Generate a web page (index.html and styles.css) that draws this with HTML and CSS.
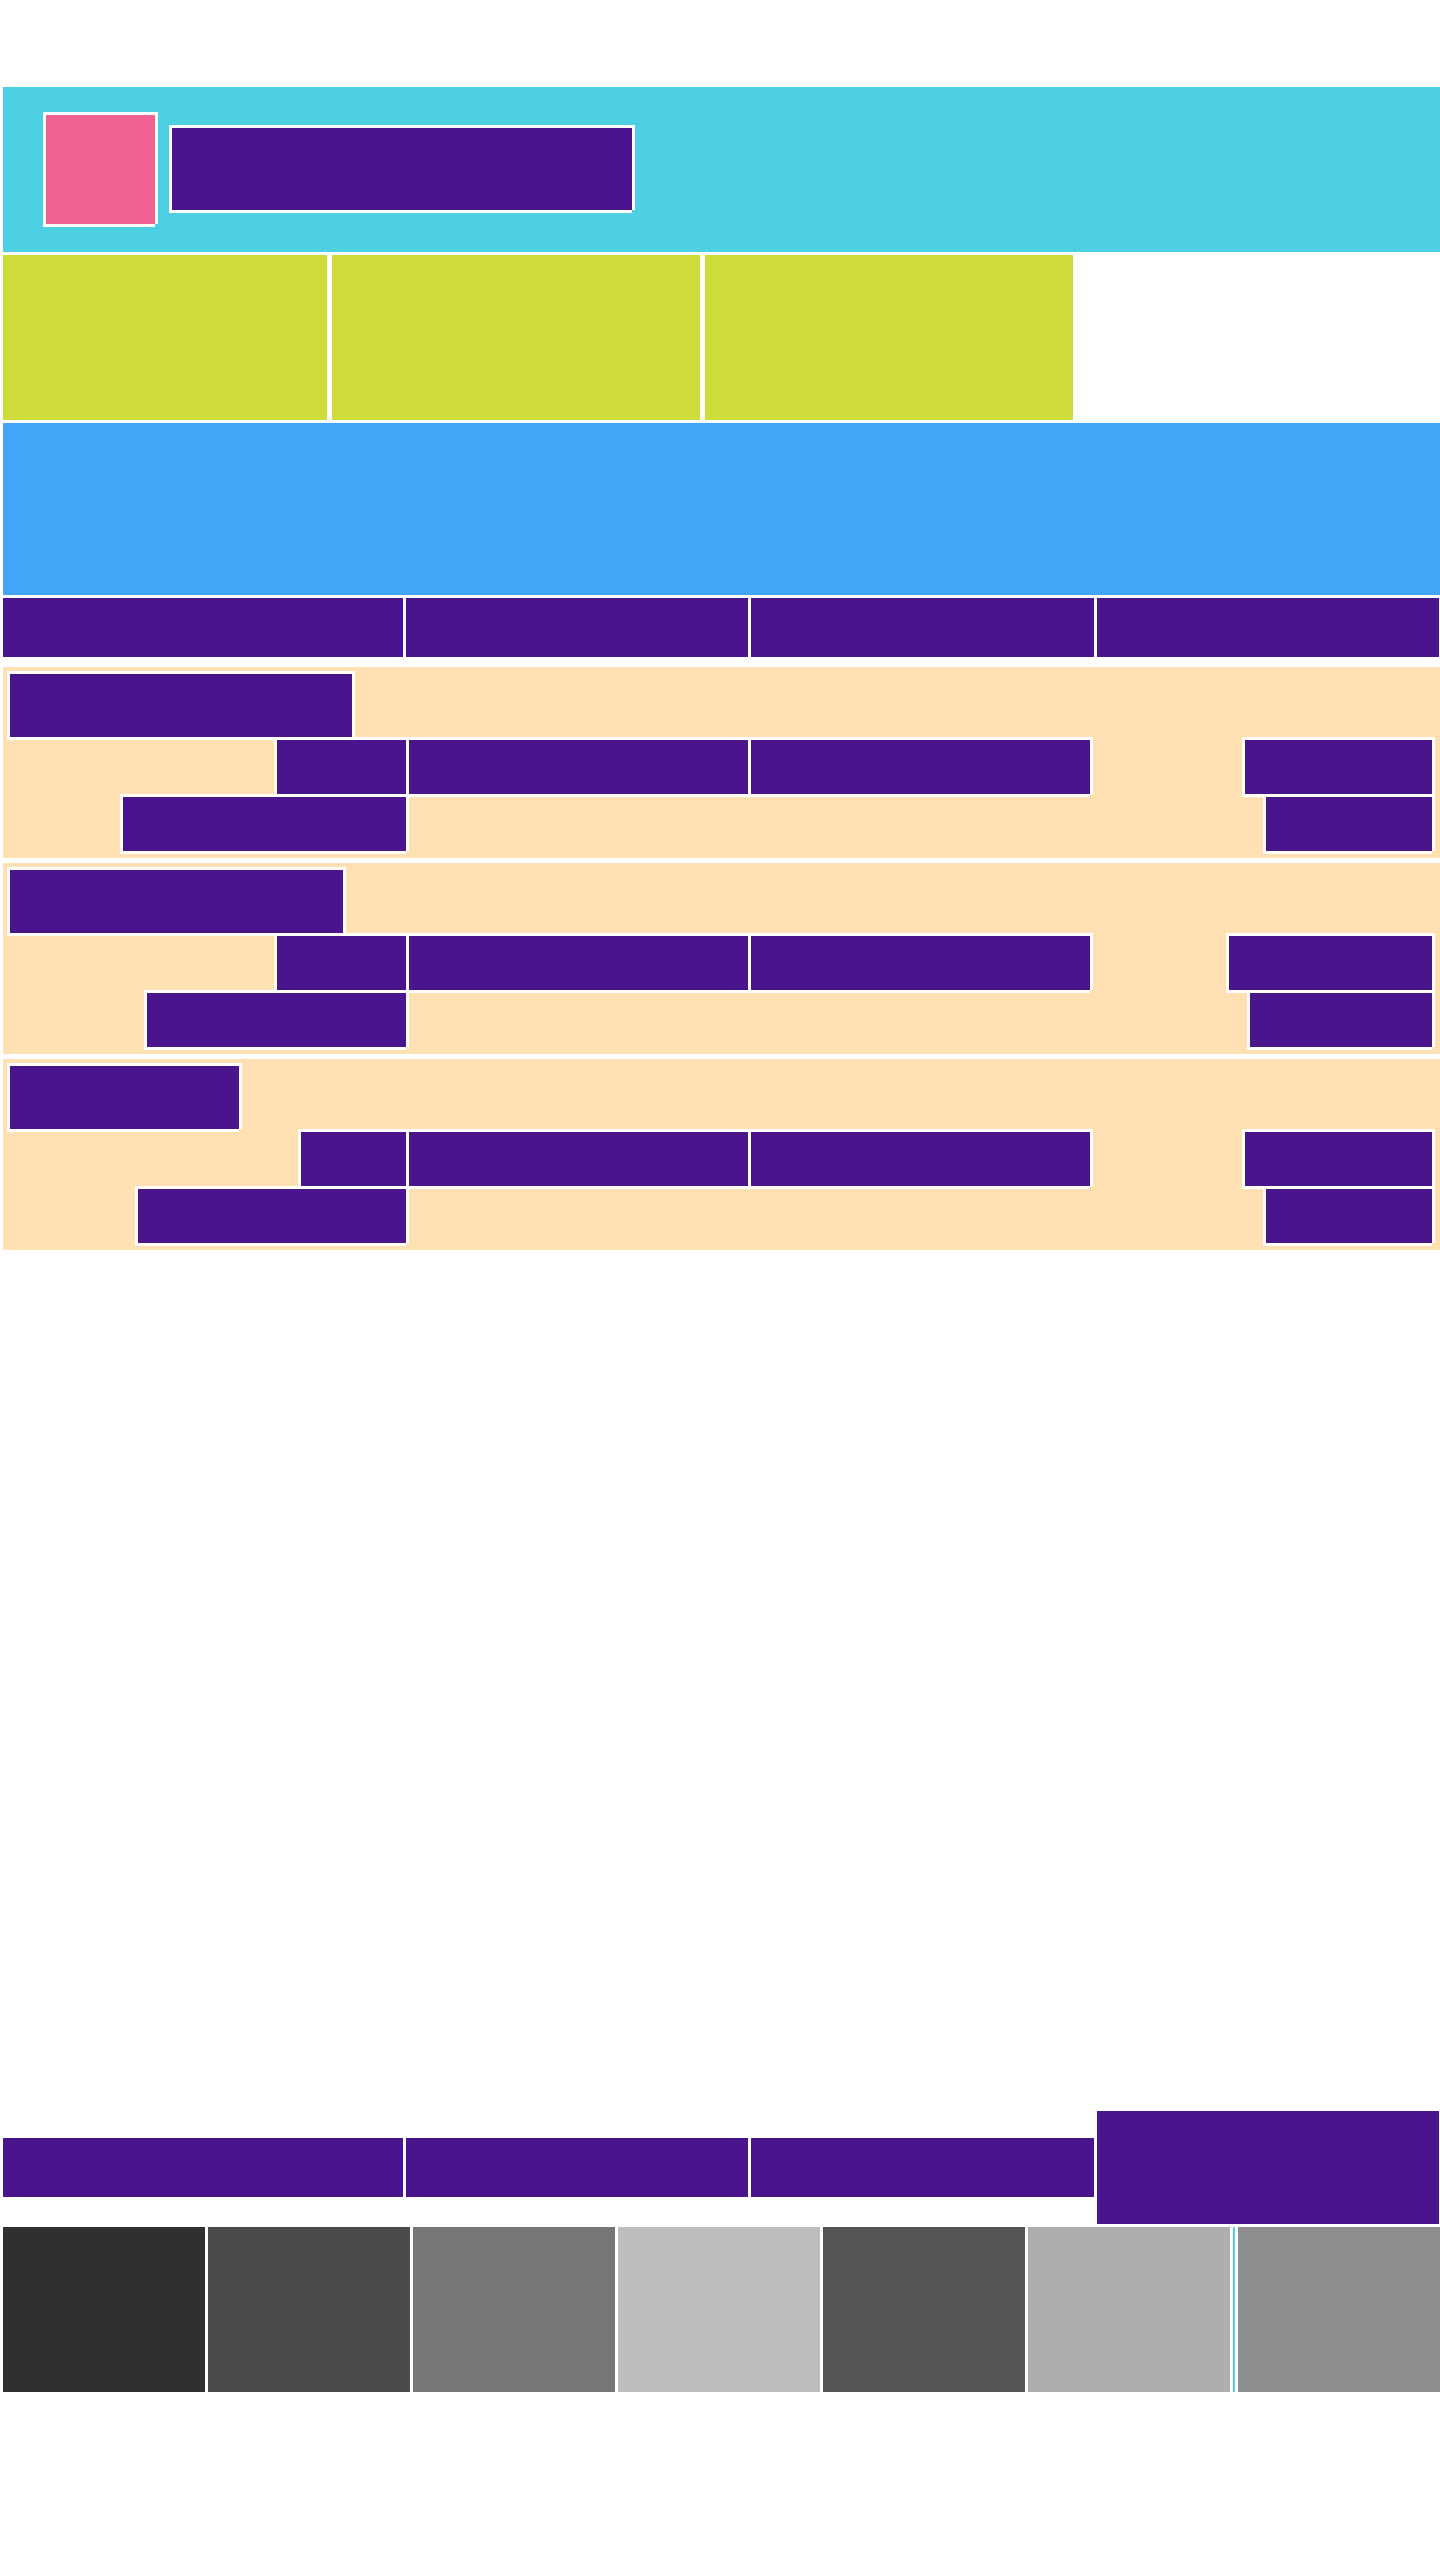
FILE: index.html
```html
<!DOCTYPE html>
<html lang="en">
<head>
    <meta charset="UTF-8">
    <meta name="viewport" content="width=device-width, initial-scale=1.0">
    <title>Layout</title>
    <link rel="stylesheet" href="styles.css">
</head>
<body>
    <header class="header">
        <div class="logo boxed"></div>
        <div class="title boxed"></div>
    </header>

    <section class="features">
        <div class="feature feature-first"></div>
        <div class="feature"></div>
        <div class="feature"></div>
    </section>

    <section class="banner"></section>

    <nav class="tabs">
        <div class="tab tab-first"></div>
        <div class="tab"></div>
        <div class="tab tab-wide"></div>
        <div class="tab"></div>
    </nav>

    <main class="cards">
        <article class="card">
            <div class="card-title boxed title-lg"></div>
            <div class="card-row">
                <div class="cell cell-left boxed left-129"></div>
                <div class="cell boxed"></div>
                <div class="cell boxed"></div>
                <div class="cell cell-right boxed right-187"></div>
            </div>
            <div class="card-row">
                <div class="cell cell-left boxed left-283"></div>
                <div class="cell cell-right boxed right-166"></div>
            </div>
        </article>

        <article class="card">
            <div class="card-title boxed title-md"></div>
            <div class="card-row">
                <div class="cell cell-left boxed left-129"></div>
                <div class="cell boxed"></div>
                <div class="cell boxed"></div>
                <div class="cell cell-right boxed right-203"></div>
            </div>
            <div class="card-row">
                <div class="cell cell-left boxed left-259"></div>
                <div class="cell cell-right boxed right-182"></div>
            </div>
        </article>

        <article class="card">
            <div class="card-title boxed title-sm"></div>
            <div class="card-row">
                <div class="cell cell-left boxed left-105"></div>
                <div class="cell boxed"></div>
                <div class="cell boxed"></div>
                <div class="cell cell-right boxed right-187"></div>
            </div>
            <div class="card-row">
                <div class="cell cell-left boxed left-268"></div>
                <div class="cell cell-right boxed right-166"></div>
            </div>
        </article>
    </main>

    <nav class="tabs tabs-bottom">
        <div class="tab tab-first"></div>
        <div class="tab"></div>
        <div class="tab tab-wide"></div>
        <div class="tab tab-tall"></div>
    </nav>

    <section class="swatches">
        <div class="swatch shade-1"></div>
        <div class="swatch shade-2"></div>
        <div class="swatch shade-3"></div>
        <div class="swatch shade-4"></div>
        <div class="swatch shade-5"></div>
        <div class="swatch shade-6"></div>
        <div class="swatch-edge"></div>
        <div class="swatch shade-7"></div>
    </section>
</body>
</html>
```

FILE: styles.css
```css
body {
    margin: 0;
    padding: 87px 0 0 3px;
    background: #fff;
    font-family: "Liberation Sans", Arial, sans-serif;
}

/* white outline, the bottom right corner stays open */
.boxed {
    box-shadow: -3px -3px 0 #fff, 3px -3px 0 #fff, -3px 3px 0 #fff, 3px 0 0 #fff, 0 3px 0 #fff;
}

.header {
    display: flex;
    align-items: center;
    gap: 17px;
    height: 165px;
    padding-left: 43px;
    background-color: #4DD0E1;
}
.logo {
    width: 109px;
    height: 109px;
    background-color: #F06292;
}
.title {
    width: 460px;
    height: 82px;
    margin-bottom: 1px;
    background-color: #4A148C;
}

.features {
    display: flex;
    gap: 5px;
    margin-top: 3px;
}
.feature {
    width: 368px;
    height: 165px;
    background-color: #CDDC39;
}
.feature-first {
    width: 324px;
}

.banner {
    height: 172px;
    margin-top: 3px;
    background-color: #42A5F5;
}

.tabs {
    display: flex;
    align-items: center;
    gap: 3px;
    margin-top: 3px;
}
.tab {
    width: 342px;
    height: 59px;
    background-color: #4A148C;
}
.tab-first {
    width: 400px;
}
.tab-wide {
    width: 343px;
}
.tab-tall {
    height: 113px;
}
.tabs-bottom {
    margin-top: 861px;
}

.cards {
    display: flex;
    flex-direction: column;
    gap: 5px;
    margin-top: 10px;
}
.card {
    height: 177px;
    padding: 7px 8px 7px 7px;
    background-color: #FFE0B2;
}
.card-title {
    height: 63px;
    background-color: #4A148C;
}
.title-lg { width: 342px; }
.title-md { width: 333px; }
.title-sm { width: 229px; }

.card-row {
    display: grid;
    grid-template-columns: 396px 339px 339px 1fr;
    gap: 3px;
    margin-top: 3px;
}
.cell {
    height: 54px;
    background-color: #4A148C;
}
.cell-left {
    grid-column: 1;
    justify-self: end;
}
.cell-right {
    grid-column: 4;
    justify-self: end;
}
.left-105 { width: 105px; }
.left-129 { width: 129px; }
.left-259 { width: 259px; }
.left-268 { width: 268px; }
.left-283 { width: 283px; }
.right-166 { width: 166px; }
.right-182 { width: 182px; }
.right-187 { width: 187px; }
.right-203 { width: 203px; }

.swatches {
    display: flex;
    margin-top: 3px;
}
.swatch {
    width: 202px;
    height: 165px;
    margin-right: 3px;
}
.shade-1 { background-color: #303030; }
.shade-2 { background-color: #4B4B4B; }
.shade-3 { background-color: #767676; }
.shade-4 { background-color: #BDBDBD; }
.shade-5 { background-color: #555555; }
.shade-6 { background-color: #AEAEAE; }
.shade-7 { background-color: #8E8E8E; margin-right: 0; }
.swatch-edge {
    width: 2px;
    height: 165px;
    margin-right: 3px;
    background-color: #4DD0E1;
}
```
